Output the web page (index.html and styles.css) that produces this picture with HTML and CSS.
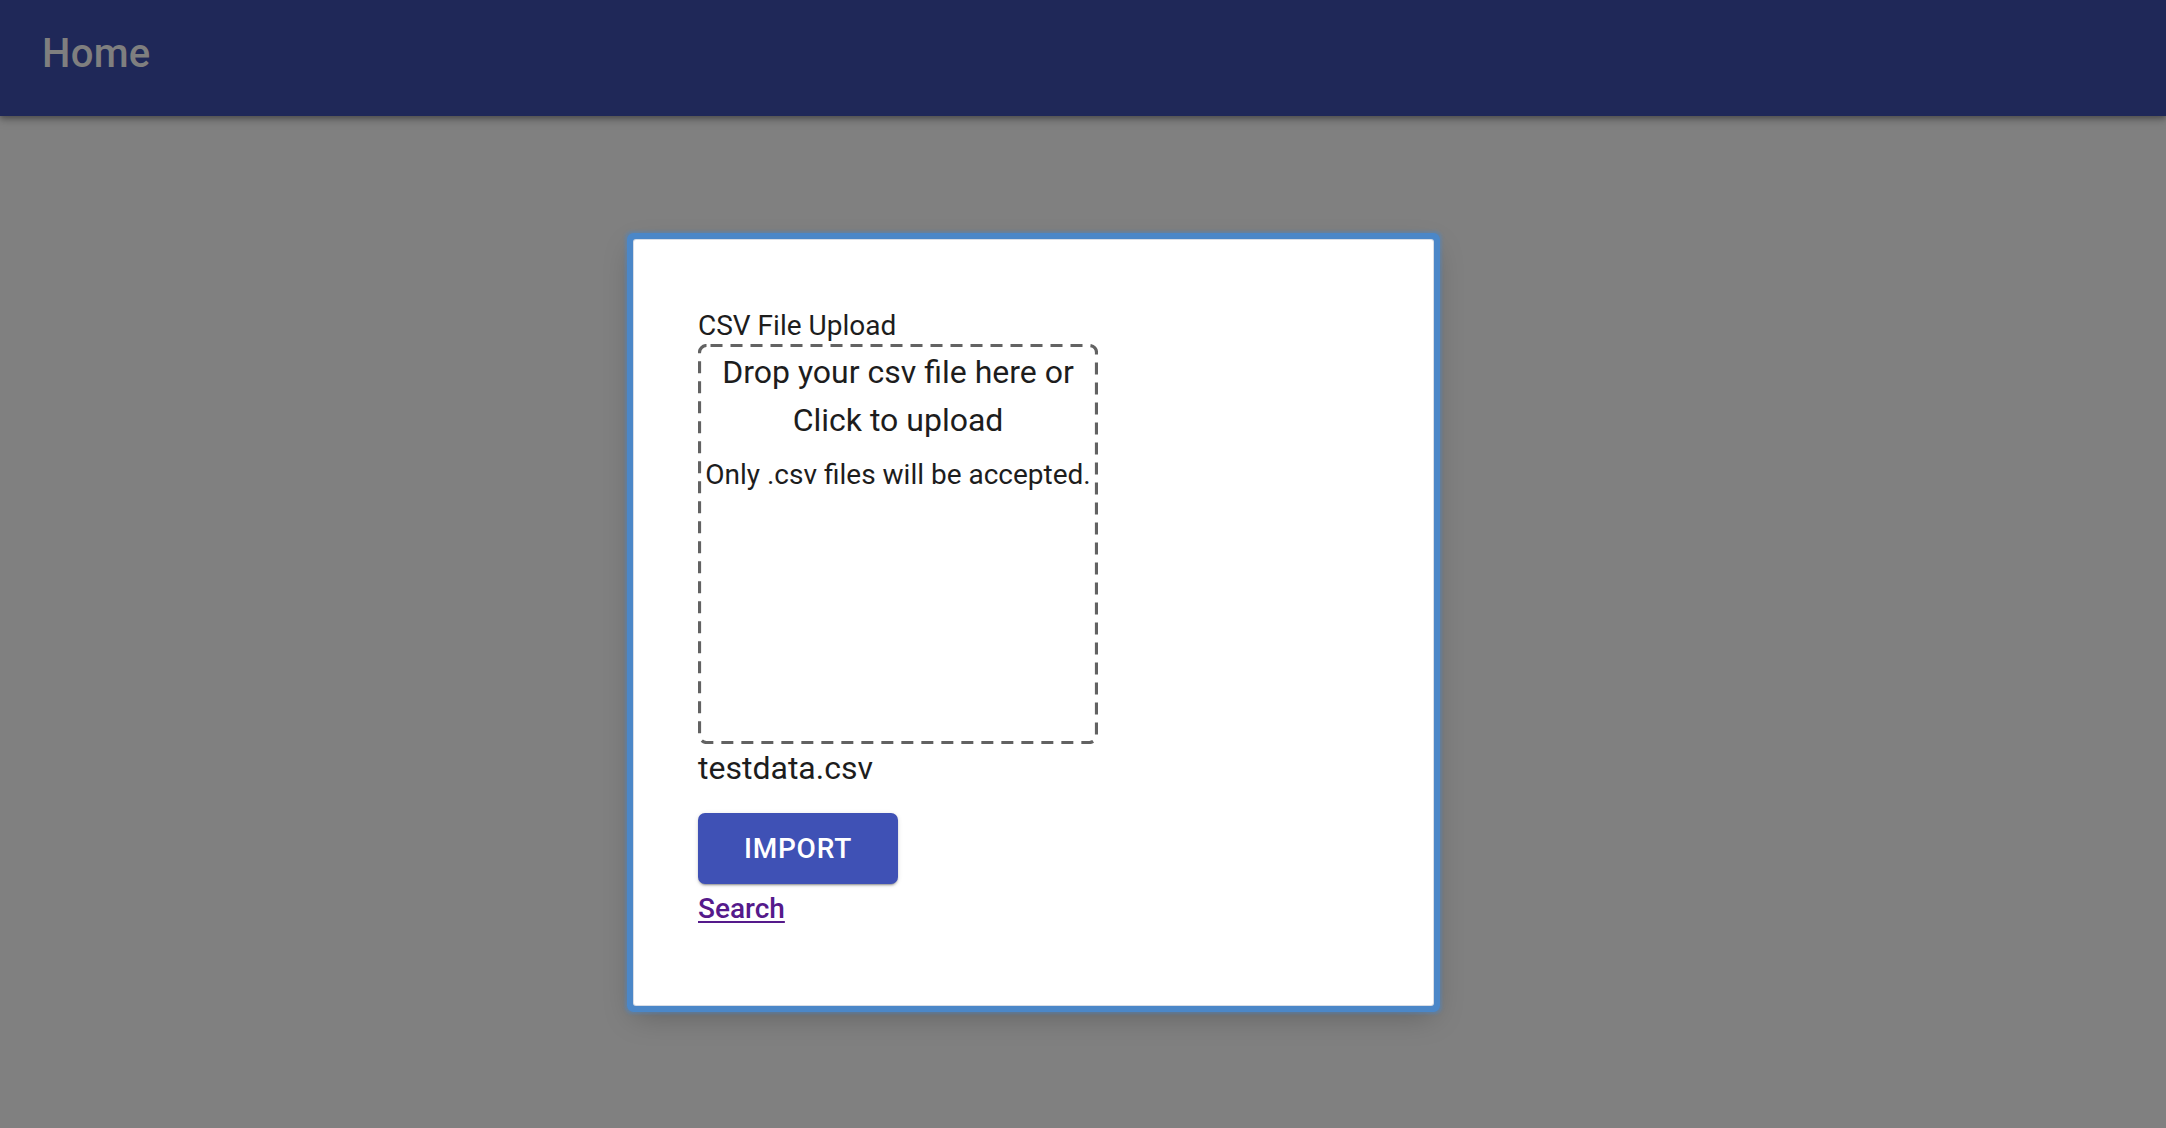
FILE: index.html
```html
<!DOCTYPE html>
<html lang="en">
<head>
<meta charset="utf-8">
<title>Home</title>
<link rel="stylesheet" href="styles.css">
</head>
<body>
<header class="appbar">
  <h6 class="appbar-title">Home</h6>
</header>
<main class="stage">
  <section class="dialog">
    <div class="field-label">CSV File Upload</div>
    <div class="dropzone">
      <svg class="dropzone-frame" width="400" height="400" viewBox="0 0 400 400" aria-hidden="true">
        <rect x="1.5" y="1.5" width="397" height="397" rx="7" ry="7" fill="none" stroke="#626262" stroke-width="3.2" stroke-dasharray="12 8" stroke-dashoffset="-4"/>
      </svg>
      <p class="drop-text">Drop your csv file here or<br>Click to upload</p>
      <p class="drop-hint">Only .csv files will be accepted.</p>
    </div>
    <div class="file-name">testdata.csv</div>
    <button class="import-btn" type="button">IMPORT</button>
    <div class="link-row"><a class="search-link" href="#search">Search</a></div>
  </section>
</main>
</body>
</html>
```
FILE: styles.css
```css
html, body {
  margin: 0;
  padding: 0;
}
body {
  background: #808080;
  font-family: Roboto, "Liberation Sans", Arial, sans-serif;
  color: #1d1d1d;
  min-height: 1128px;
  overflow: hidden;
}
.appbar {
  position: relative;
  height: 116px;
  box-sizing: border-box;
  padding: 22px 0 0 42px;
  background: #1f2858;
  box-shadow: 0 2px 6px rgba(0,0,0,0.35), 0 4px 10px rgba(0,0,0,0.15);
}
.appbar-title {
  margin: 0;
  font-size: 40px;
  line-height: 64px;
  font-weight: 500;
  color: #7f7f7f;
  letter-spacing: 0.3px;
}
.stage {
  padding: 124px 0 0 634px;
}
.dialog {
  width: 799px;
  box-sizing: border-box;
  background: #fff;
  border-radius: 2px;
  padding: 67px 0 75px 64px;
  box-shadow: 0 0 0 1px #d8dde6, 0 0 0 7px #4b87c8, 0 0 3px 9px rgba(75,135,200,0.45), 0 10px 30px rgba(0,0,0,0.25);
}
.field-label {
  font-size: 28px;
  line-height: 37px;
  color: #1d1d1d;
}
.dropzone {
  position: relative;
  width: 400px;
  height: 400px;
  box-sizing: border-box;
  border: 3px solid transparent;
  border-radius: 8px;
  text-align: center;
  padding-top: 1px;
}
.dropzone-frame {
  position: absolute;
  left: -3px;
  top: -3px;
  display: block;
}
.drop-text {
  position: relative;
  margin: 0;
  font-size: 32px;
  line-height: 48px;
  color: #1d1d1d;
}
.drop-hint {
  position: relative;
  margin: 10px -6px 0;
  font-size: 28px;
  line-height: 42px;
  color: #1d1d1d;
  white-space: nowrap;
}
.file-name {
  font-size: 32px;
  line-height: 48px;
  color: #1d1d1d;
}
.import-btn {
  display: block;
  margin-top: 21px;
  width: 200px;
  height: 71px;
  border: 0;
  border-radius: 7px;
  background: #3f51b5;
  color: #fff;
  font-family: Roboto, "Liberation Sans", Arial, sans-serif;
  font-size: 28px;
  font-weight: 500;
  letter-spacing: 0.8px;
  padding: 0;
  box-shadow: 0 3px 1px -2px rgba(0,0,0,0.2), 0 2px 2px 0 rgba(0,0,0,0.14), 0 1px 5px 0 rgba(0,0,0,0.12);
  cursor: pointer;
}
.link-row {
  margin-top: 4px;
  font-size: 28px;
  line-height: 42px;
}
.search-link {
  color: #551a8b;
  font-weight: 500;
  text-decoration: underline;
  text-decoration-thickness: 2px;
  text-underline-offset: 3px;
}
```
